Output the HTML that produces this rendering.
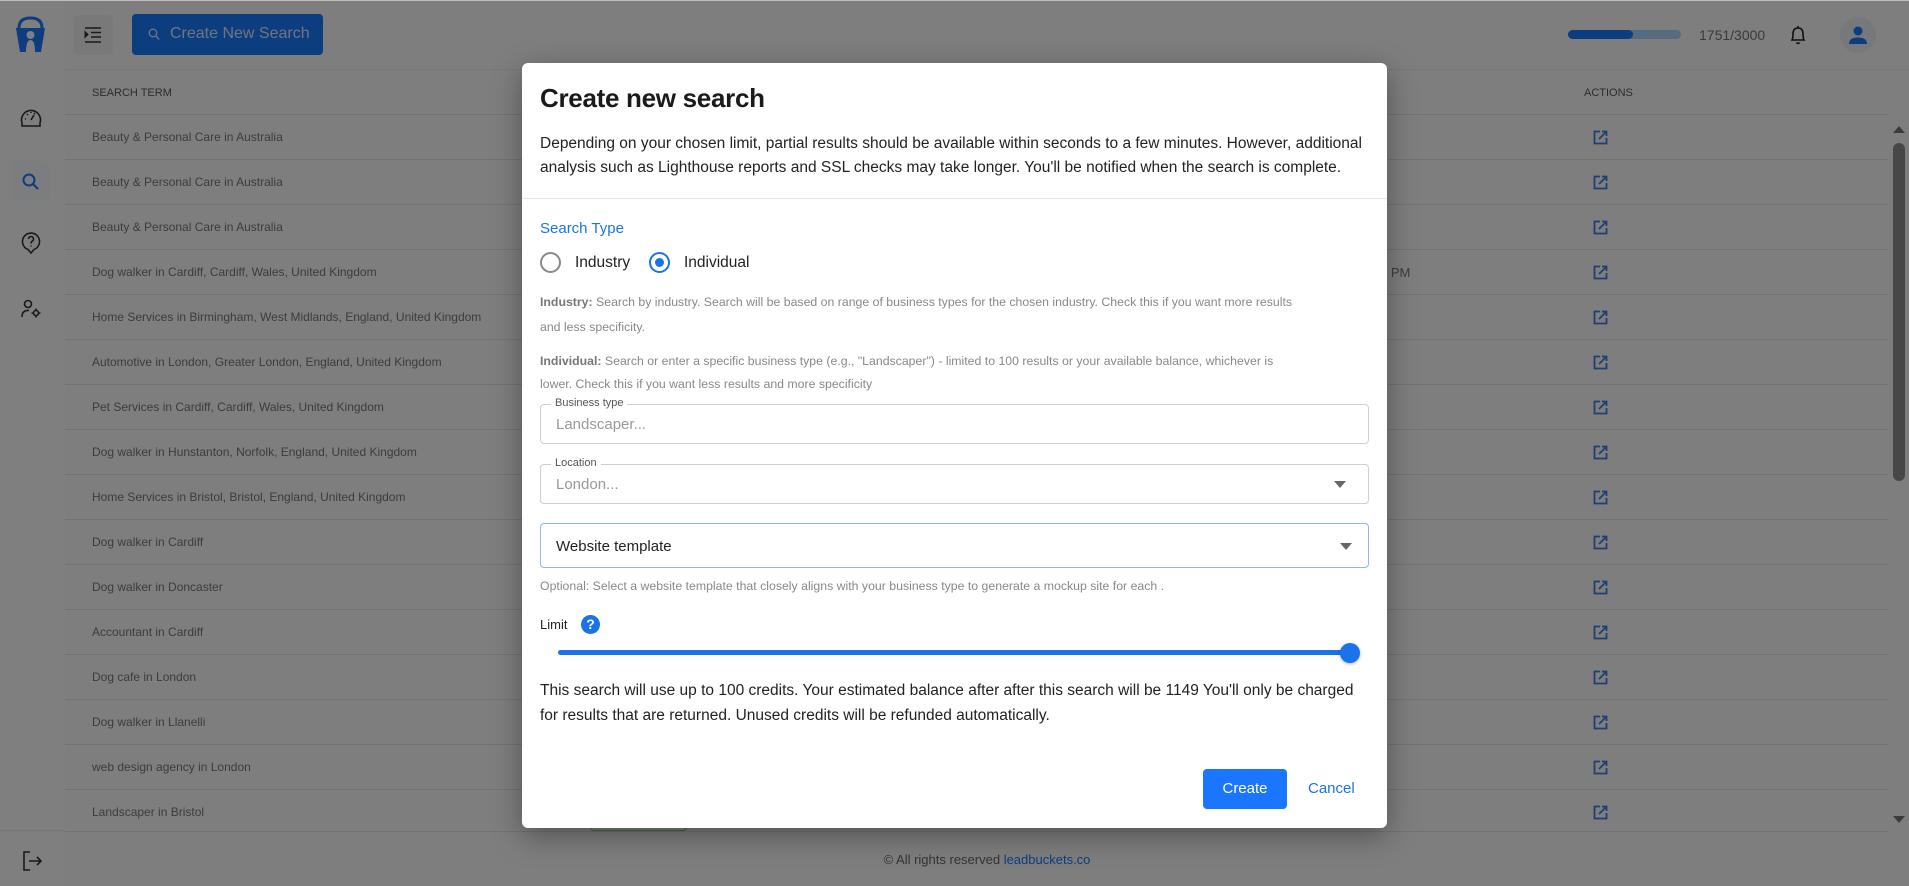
<!DOCTYPE html>
<html><head><meta charset="utf-8"><style>
*{box-sizing:border-box;margin:0;padding:0}
html,body{background:#fdfdfd}
body{width:1909px;height:886px;overflow:hidden;font-family:"Liberation Sans",sans-serif;position:relative}
.a{position:absolute}
.row{position:absolute;left:65px;width:1823px;height:45px;border-bottom:1px solid #e6e6e6}
.row span{position:absolute;left:27px;top:15px;font-size:12px;color:#787878;white-space:nowrap}
.m{font-size:15.5px;color:#222}
</style></head><body>
<div class="a" style="left:0;top:0;width:65px;height:886px;background:#fff"></div>
<div class="a" style="left:0;top:830px;width:65px;height:1px;background:#eee"></div>
<svg class="a" style="left:15px;top:16px" width="31" height="38" viewBox="0 0 31 38"><path d="M4 12 Q4 2 15.5 2 Q27 2 27 12" fill="none" stroke="#1a7aff" stroke-width="3"/><path d="M1 12 H30 L26 36 L20 36 Q20 24 15.5 24 Q11 24 11 36 L5 36 Z" fill="#1a7aff"/><circle cx="15.5" cy="19" r="4" fill="#fff"/></svg>
<svg class="a" style="left:19px;top:106px" width="24" height="24" viewBox="0 0 24 24" fill="none" stroke="#333" stroke-width="1.6"><path d="M3 17 A9.5 9.5 0 1 1 21 17 V20 H3 Z"/><path d="M12 14 L15 9 M6 13h1 M8 8l1 1 M12 6v1 M16 7l-1 1"/></svg>
<div class="a" style="left:12px;top:161px;width:38px;height:40px;border-radius:6px;background:#f6fbff"></div>
<svg class="a" style="left:21px;top:172px" width="20" height="20" viewBox="0 0 20 20" fill="none" stroke="#1a7aff" stroke-width="2"><circle cx="8" cy="8" r="5.5"/><path d="M12 12l5 5"/></svg>
<svg class="a" style="left:20px;top:231px" width="22" height="24" viewBox="0 0 22 24" fill="none" stroke="#333" stroke-width="1.6"><path d="M11 22 L8 18.5 A8.5 8.5 0 1 1 14 18.5 Z"/><path d="M8.5 8 A2.5 2.5 0 1 1 12 10.3 Q11 11 11 12.5 M11 14.5v1"/></svg>
<svg class="a" style="left:20px;top:298px" width="22" height="22" viewBox="0 0 22 22" fill="none" stroke="#333" stroke-width="1.6"><circle cx="8" cy="6" r="3.5"/><path d="M2 19 Q2 12 9 12.5"/><circle cx="16" cy="15" r="2.5"/><path d="M16 10.5v2M16 17.5v2M11.5 15h2M18.5 15h2"/></svg>
<svg class="a" style="left:21px;top:850px" width="22" height="22" viewBox="0 0 22 22" fill="none" stroke="#333" stroke-width="1.6"><path d="M9 2H3v18h6M8 11h12M16 7l4 4-4 4"/></svg>
<div class="a" style="left:74px;top:15px;width:39px;height:40px;border-radius:5px;background:#f3f3f3"></div>
<svg class="a" style="left:84px;top:27px" width="18" height="16" viewBox="0 0 18 16" stroke="#333" stroke-width="1.6"><path d="M1 1h16M7 5.5h10M7 10h10M1 15h16"/><path d="M1 4.5l3 3-3 3z" fill="#333" stroke-width="1"/></svg>
<div class="a" style="left:132px;top:14px;width:191px;height:41px;border-radius:4px;background:#187aff"></div>
<svg class="a" style="left:148px;top:28px" width="12" height="13" viewBox="0 0 12 13" fill="none" stroke="#d8e6ff" stroke-width="1.4"><circle cx="5" cy="5" r="3.8"/><path d="M8 8l3 3.5"/></svg>
<div class="a" style="left:170px;top:25px;font-size:16px;color:#dfeaff">Create New Search</div>
<div class="a" style="left:1568px;top:30px;width:113px;height:9px;border-radius:5px;background:#b0d4ff"></div>
<div class="a" style="left:1568px;top:30px;width:65px;height:9px;border-radius:5px;background:#187aff"></div>
<div class="a" style="left:1699px;top:27px;font-size:14px;color:#747474">1751/3000</div>
<svg class="a" style="left:1790px;top:25px" width="16" height="20" viewBox="0 0 16 20" fill="none" stroke="#222" stroke-width="1.6"><path d="M2 15 Q3 13 3 9 Q3 3 8 3 Q13 3 13 9 Q13 13 14 15 Z M6.5 17.5 Q8 19.5 9.5 17.5 M8 1v2"/></svg>
<div class="a" style="left:1840px;top:17px;width:36px;height:36px;border-radius:50%;background:#ecf0f6"></div>
<svg class="a" style="left:1848px;top:25px" width="20" height="20" viewBox="0 0 20 20" fill="#187aff"><circle cx="10" cy="6" r="4.5"/><path d="M1 19 Q1 12.5 10 12.5 Q19 12.5 19 19 Z"/></svg>
<div class="a" style="left:65px;top:69px;width:1844px;height:1px;background:#eee"></div>
<div class="row" style="top:70px"><span style="top:17px;font-size:11px;color:#585858">SEARCH TERM</span><span style="left:1519px;top:17px;font-size:11px;color:#585858">ACTIONS</span></div>
<div class="row" style="top:115px"><span>Beauty &amp; Personal Care in Australia</span></div>
<div class="row" style="top:160px"><span>Beauty &amp; Personal Care in Australia</span></div>
<div class="row" style="top:205px"><span>Beauty &amp; Personal Care in Australia</span></div>
<div class="row" style="top:250px"><span>Dog walker in Cardiff, Cardiff, Wales, United Kingdom</span><span style="left:1315px;font-size:13px">7 PM</span></div>
<div class="row" style="top:295px"><span>Home Services in Birmingham, West Midlands, England, United Kingdom</span></div>
<div class="row" style="top:340px"><span>Automotive in London, Greater London, England, United Kingdom</span></div>
<div class="row" style="top:385px"><span>Pet Services in Cardiff, Cardiff, Wales, United Kingdom</span></div>
<div class="row" style="top:430px"><span>Dog walker in Hunstanton, Norfolk, England, United Kingdom</span></div>
<div class="row" style="top:475px"><span>Home Services in Bristol, Bristol, England, United Kingdom</span></div>
<div class="row" style="top:520px"><span>Dog walker in Cardiff</span></div>
<div class="row" style="top:565px"><span>Dog walker in Doncaster</span></div>
<div class="row" style="top:610px"><span>Accountant in Cardiff</span></div>
<div class="row" style="top:655px"><span>Dog cafe in London</span></div>
<div class="row" style="top:700px"><span>Dog walker in Llanelli</span></div>
<div class="row" style="top:745px"><span>web design agency in London</span></div>
<div class="row" style="top:790px;height:42px"><span>Landscaper in Bristol</span></div>
<div class="a" style="left:590px;top:815px;width:97px;height:16px;border:1px solid #7fd474;border-radius:4px"></div>
<svg class="a" style="left:0;top:0" width="1909" height="886">
<defs><g id="ext"><path d="M7 1.5H1.5v12h12V8" fill="none" stroke="#3b7ee8" stroke-width="1.8"/><path d="M6 9L13 2M9 1.5h4.5V6" fill="none" stroke="#3b7ee8" stroke-width="1.8"/></g></defs>
<use href="#ext" x="1593" y="130"/><use href="#ext" x="1593" y="175"/><use href="#ext" x="1593" y="220"/><use href="#ext" x="1593" y="265"/>
<use href="#ext" x="1593" y="310"/><use href="#ext" x="1593" y="355"/><use href="#ext" x="1593" y="400"/><use href="#ext" x="1593" y="445"/>
<use href="#ext" x="1593" y="490"/><use href="#ext" x="1593" y="535"/><use href="#ext" x="1593" y="580"/><use href="#ext" x="1593" y="625"/>
<use href="#ext" x="1593" y="670"/><use href="#ext" x="1593" y="715"/><use href="#ext" x="1593" y="760"/><use href="#ext" x="1593" y="805"/>
<path d="M1893 133 L1899 126 L1905 133Z" fill="#777"/>
<path d="M1893 816 L1899 823 L1905 816Z" fill="#777"/>
<rect x="1893" y="143" width="12" height="338" rx="6" fill="#8f8f8f"/>
</svg>
<div class="a" style="left:0;top:852px;width:1909px;text-align:center;font-size:13px;color:#666;padding-left:65px">© All rights reserved <span style="color:#187aff">leadbuckets.co</span></div>
<div class="a" style="left:0;top:0;width:1909px;height:886px;background:rgba(0,0,0,0.5)"></div>
<div class="a" style="left:0;top:0;width:1909px;height:1px;background:#bdbdbd"></div>
<div class="a" style="left:522px;top:63px;width:865px;height:765px;background:#fff;border-radius:6px;box-shadow:0 8px 30px rgba(0,0,0,.35)">
<div class="a" style="left:18px;top:20px;font-size:26px;font-weight:bold;color:#1a1a1a;letter-spacing:-0.3px">Create new search</div>
<div class="a m" style="left:18px;top:69px;width:835px;line-height:24px">Depending on your chosen limit, partial results should be available within seconds to a few minutes. However, additional analysis such as Lighthouse reports and SSL checks may take longer. You'll be notified when the search is complete.</div>
<div class="a" style="left:0;top:135px;width:865px;height:1px;background:#e6e6e6"></div>
<div class="a" style="left:18px;top:157px;font-size:15px;color:#1a73e8">Search Type</div>
<div class="a" style="left:18px;top:189px;width:21px;height:21px;border-radius:50%;border:2px solid #888"></div>
<div class="a m" style="left:53px;top:191px">Industry</div>
<div class="a" style="left:127px;top:189px;width:21px;height:21px;border-radius:50%;border:2px solid #1a73e8"></div>
<div class="a" style="left:133px;top:195px;width:9px;height:9px;border-radius:50%;background:#1a73e8"></div>
<div class="a m" style="left:162px;top:191px">Individual</div>
<div class="a" style="left:18px;top:227px;white-space:nowrap;font-size:12.3px;line-height:24.5px;color:#888"><b style="color:#777">Industry:</b> Search by industry. Search will be based on range of business types for the chosen industry. Check this if you want more results<br>and less specificity.</div>
<div class="a" style="left:18px;top:287px;white-space:nowrap;font-size:12.3px;line-height:23px;color:#888"><b style="color:#777">Individual:</b> Search or enter a specific business type (e.g., "Landscaper") - limited to 100 results or your available balance, whichever is<br>lower. Check this if you want less results and more specificity</div>
<div class="a" style="left:18px;top:341px;width:829px;height:40px;border:1px solid #cfcfcf;border-radius:4px"></div>
<div class="a" style="left:29px;top:334px;background:#fff;padding:0 4px;font-size:11px;color:#555">Business type</div>
<div class="a" style="left:34px;top:353px;font-size:15px;color:#999">Landscaper...</div>
<div class="a" style="left:18px;top:401px;width:829px;height:40px;border:1px solid #cfcfcf;border-radius:4px"></div>
<div class="a" style="left:29px;top:394px;background:#fff;padding:0 4px;font-size:11px;color:#555">Location</div>
<div class="a" style="left:34px;top:413px;font-size:15px;color:#999">London...</div>
<svg class="a" style="left:812px;top:418px" width="12" height="7"><path d="M0 0h12L6 7z" fill="#666"/></svg>
<div class="a" style="left:18px;top:460px;width:829px;height:45px;border:1px solid #8fb6ee;border-radius:4px"></div>
<div class="a m" style="left:34px;top:475px;font-size:15px">Website template</div>
<svg class="a" style="left:818px;top:480px" width="12" height="7"><path d="M0 0h12L6 7z" fill="#666"/></svg>
<div class="a" style="left:18px;top:516px;font-size:12.3px;color:#888">Optional: Select a website template that closely aligns with your business type to generate a mockup site for each .</div>
<div class="a" style="left:18px;top:554px;font-size:13px;color:#222">Limit</div>
<div class="a" style="left:59px;top:552px;width:19px;height:19px;border-radius:50%;background:#1a73e8;color:#fff;font-size:14px;font-weight:bold;text-align:center;line-height:19px">?</div>
<div class="a" style="left:36px;top:587px;width:792px;height:5px;border-radius:3px;background:#1a73e8"></div>
<div class="a" style="left:818px;top:580px;width:20px;height:20px;border-radius:50%;background:#1a73e8;box-shadow:0 1px 3px rgba(0,0,0,.3)"></div>
<div class="a m" style="left:18px;top:615px;width:835px;line-height:25px">This search will use up to 100 credits. Your estimated balance after after this search will be 1149 You'll only be charged for results that are returned. Unused credits will be refunded automatically.</div>
<div class="a" style="left:681px;top:706px;width:84px;height:40px;border-radius:4px;background:#1a75ff;color:#fff;font-size:15px;text-align:center;line-height:40px">Create</div>
<div class="a" style="left:786px;top:717px;font-size:15px;color:#1a73e8">Cancel</div>
</div>
</body></html>
